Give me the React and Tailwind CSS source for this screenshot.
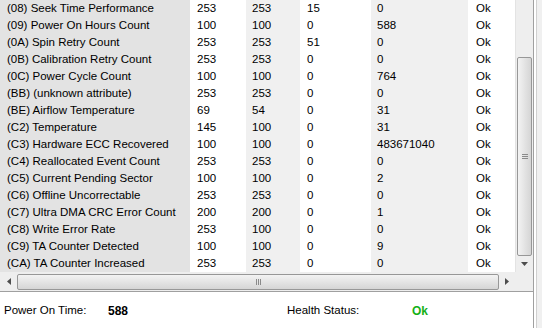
const rows = [
  ["(08) Seek Time Performance", "253", "253", "15", "0"],
  ["(09) Power On Hours Count", "100", "100", "0", "588"],
  ["(0A) Spin Retry Count", "253", "253", "51", "0"],
  ["(0B) Calibration Retry Count", "253", "253", "0", "0"],
  ["(0C) Power Cycle Count", "100", "100", "0", "764"],
  ["(BB) (unknown attribute)", "253", "253", "0", "0"],
  ["(BE) Airflow Temperature", "69", "54", "0", "31"],
  ["(C2) Temperature", "145", "100", "0", "31"],
  ["(C3) Hardware ECC Recovered", "100", "100", "0", "483671040"],
  ["(C4) Reallocated Event Count", "253", "253", "0", "0"],
  ["(C5) Current Pending Sector", "100", "100", "0", "2"],
  ["(C6) Offline Uncorrectable", "253", "253", "0", "0"],
  ["(C7) Ultra DMA CRC Error Count", "200", "200", "0", "1"],
  ["(C8) Write Error Rate", "253", "100", "0", "0"],
  ["(C9) TA Counter Detected", "100", "100", "0", "9"],
  ["(CA) TA Counter Increased", "253", "253", "0", "0"],
];

function Row({ r }) {
  return (
    <div className="flex h-[17px] leading-[17px]">
      <div className="w-[190px] shrink-0 bg-[#e3e3e3] pl-[7px] whitespace-nowrap">{r[0]}</div>
      <div className="w-[56px] shrink-0 bg-white pl-[7px]">{r[1]}</div>
      <div className="w-[54px] shrink-0 bg-[#f0f0f0] pl-[6px]">{r[2]}</div>
      <div className="w-[71px] shrink-0 bg-white pl-[7px]">{r[3]}</div>
      <div className="w-[97px] shrink-0 bg-[#f0f0f0] pl-[6px]">{r[4]}</div>
      <div className="flex-1 bg-white pl-[8px]">Ok</div>
    </div>
  );
}

function Arrow({ dir }) {
  const pts = {
    down: "0,0 7,0 3.5,4",
    left: "4,0 4,7 0,3.5",
    right: "0,0 0,7 4,3.5",
  }[dir];
  const size = dir === "down" ? { w: 7, h: 4 } : { w: 4, h: 7 };
  return (
    <svg width={size.w} height={size.h} viewBox={`0 0 ${size.w} ${size.h}`}>
      <polygon points={pts} fill="#4d4d4d" />
    </svg>
  );
}

export default function App() {
  return (
    <div
      className="w-[542px] h-[328px] overflow-hidden bg-white text-[11.5px] text-black flex"
      style={{ fontFamily: '"Liberation Sans", Arial, sans-serif' }}
    >
      <div className="w-[533px] flex flex-col">
        <div className="flex h-[272px]">
          <div className="w-[515px] flex flex-col">
            {rows.map((r) => (
              <Row key={r[0]} r={r} />
            ))}
          </div>
          {/* vertical scrollbar */}
          <div className="w-[18px] flex flex-col bg-[#eeeeee] border-l border-[#e3e3e3]">
            <div className="h-[57px]" />
            <div className="mx-[1px] h-[199px] rounded-[2px] border border-[#979797] bg-gradient-to-r from-[#f3f3f3] to-[#d5d5d5] flex items-center justify-center">
              <div className="flex flex-col gap-[1px]">
                <div className="w-[6px] h-[1px] bg-[#8a8a8a]" />
                <div className="w-[6px] h-[1px] bg-[#8a8a8a]" />
                <div className="w-[6px] h-[1px] bg-[#8a8a8a]" />
              </div>
            </div>
            <div className="flex-1 flex items-center justify-center">
              <Arrow dir="down" />
            </div>
          </div>
        </div>
        {/* horizontal scrollbar */}
        <div className="flex h-[20px] border-b border-[#a0a0a0]">
          <div className="w-[515px] flex items-center bg-[#eeeeee]">
            <div className="w-[17px] flex justify-center">
              <Arrow dir="left" />
            </div>
            <div className="w-[482px] h-[16px] rounded-[2px] border border-[#979797] bg-gradient-to-b from-[#f3f3f3] to-[#d5d5d5] flex items-center justify-center">
              <div className="flex gap-[1px]">
                <div className="w-[1px] h-[6px] bg-[#8a8a8a]" />
                <div className="w-[1px] h-[6px] bg-[#8a8a8a]" />
                <div className="w-[1px] h-[6px] bg-[#8a8a8a]" />
              </div>
            </div>
            <div className="flex-1 flex justify-center">
              <Arrow dir="right" />
            </div>
          </div>
          <div className="w-[18px] bg-[#eeeeee]" />
        </div>
        {/* status */}
        <div className="flex-1 flex items-center pt-[2px]">
          <span className="w-[108px] pl-[4px]">Power On Time:</span>
          <span className="w-[179px] font-bold text-[12px]">588</span>
          <span className="w-[125px]">Health Status:</span>
          <span className="font-bold text-[12px] text-[#16b016]">Ok</span>
        </div>
      </div>
      <div className="flex-1 flex">
        <div className="w-[1px] bg-[#a0a0a0]" />
        <div className="w-[2px] bg-white" />
        <div className="w-[1px] bg-[#d0d0d0]" />
        <div className="flex-1 bg-[#f0f0f0]" />
      </div>
    </div>
  );
}
